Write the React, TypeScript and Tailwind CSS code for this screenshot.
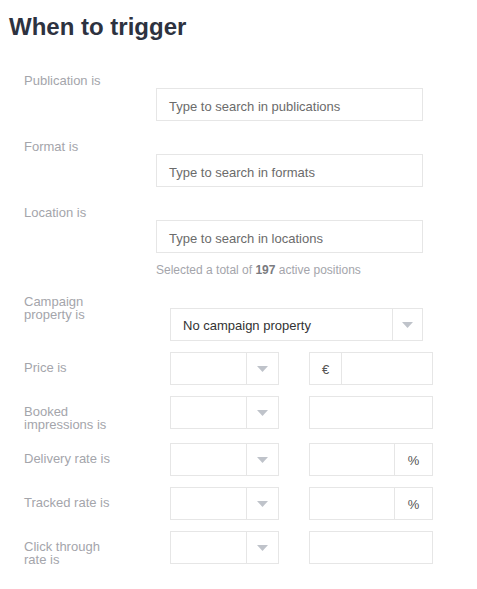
const Caret = () => (
  <svg width="11" height="6" viewBox="0 0 11 6" className="block">
    <path d="M0 0h11L5.5 6z" fill="#bfc3ca" />
  </svg>
);

const SearchField = ({ placeholder }: { placeholder: string }) => (
  <div className="mt-[15px] flex h-[33px] w-[267px] items-center border border-[#e6e6e6] px-[12px] pt-[4px] text-[13px] text-[#6b6b6b]">
    {placeholder}
  </div>
);

const SmallSelect = () => (
  <div className="flex h-[33px] w-[109px] border border-[#e6e6e6]">
    <div className="flex-1" />
    <div className="flex w-[32px] items-center justify-center border-l border-[#e6e6e6]">
      <Caret />
    </div>
  </div>
);

const ValueInput = ({ prefix, suffix }: { prefix?: string; suffix?: string }) => (
  <div className="ml-[30px] flex h-[33px] w-[124px] border border-[#e6e6e6] text-[13px] text-[#555]">
    {prefix && (
      <div className="flex w-[32px] items-center justify-center border-r border-[#e6e6e6] pt-[3px]">{prefix}</div>
    )}
    <div className="flex-1" />
    {suffix && (
      <div className="flex w-[38px] items-center justify-center border-l border-[#e6e6e6] pt-[3px]">{suffix}</div>
    )}
  </div>
);

const rangeRows = [
  { label: "Price is", prefix: "€", gap: "mt-[11px]" },
  { label: "Booked impressions is", gap: "mt-[11px]" },
  { label: "Delivery rate is", suffix: "%", gap: "mt-[12px]" },
  { label: "Tracked rate is", suffix: "%", gap: "mt-[11px]" },
  { label: "Click through rate is", gap: "mt-[11px]" },
];

export default function App() {
  return (
    <div className="min-h-[589px] bg-white pb-8 font-['Liberation_Sans',Arial,sans-serif]">
      <h1 className="pl-[9px] pt-[13px] text-[24px] font-bold leading-[28px] text-[#2d3240]">When to trigger</h1>

      <div className="mt-[32px] pl-[24px]">
        {[
          { label: "Publication is", placeholder: "Type to search in publications" },
          { label: "Format is", placeholder: "Type to search in formats" },
          { label: "Location is", placeholder: "Type to search in locations" },
        ].map((row, i) => (
          <div key={row.label} className={`flex items-start ${i > 0 ? "mt-[18px]" : ""}`}>
            <div className="w-[132px] text-[13px] leading-4 text-[#a4a5ab]">{row.label}</div>
            <SearchField placeholder={row.placeholder} />
          </div>
        ))}

        <p className="ml-[132px] mt-[9px] text-[12px] leading-4 text-[#a4a5ab]">
          Selected a total of <span className="font-bold text-[#7a7b80]">197</span> active positions
        </p>

        <div className="mt-[17px] flex items-start">
          <div className="w-[146px]">
            <div className="w-[100px] text-[13px] leading-[13px] text-[#a4a5ab]">Campaign property is</div>
          </div>
          <div className="mt-[13px] flex h-[33px] w-[253px] border border-[#e6e6e6]">
            <div className="flex flex-1 items-center px-[12px] pt-[3px] text-[13px] text-[#333]">No campaign property</div>
            <div className="flex w-[30px] items-center justify-center border-l border-[#e6e6e6]">
              <Caret />
            </div>
          </div>
        </div>

        {rangeRows.map((row) => (
          <div key={row.label} className={`flex items-start ${row.gap}`}>
            <div className="w-[146px] pt-[9px]">
              <div className="w-[100px] text-[13px] leading-[13px] text-[#a4a5ab]">{row.label}</div>
            </div>
            <SmallSelect />
            <ValueInput prefix={row.prefix} suffix={row.suffix} />
          </div>
        ))}
      </div>
    </div>
  );
}
